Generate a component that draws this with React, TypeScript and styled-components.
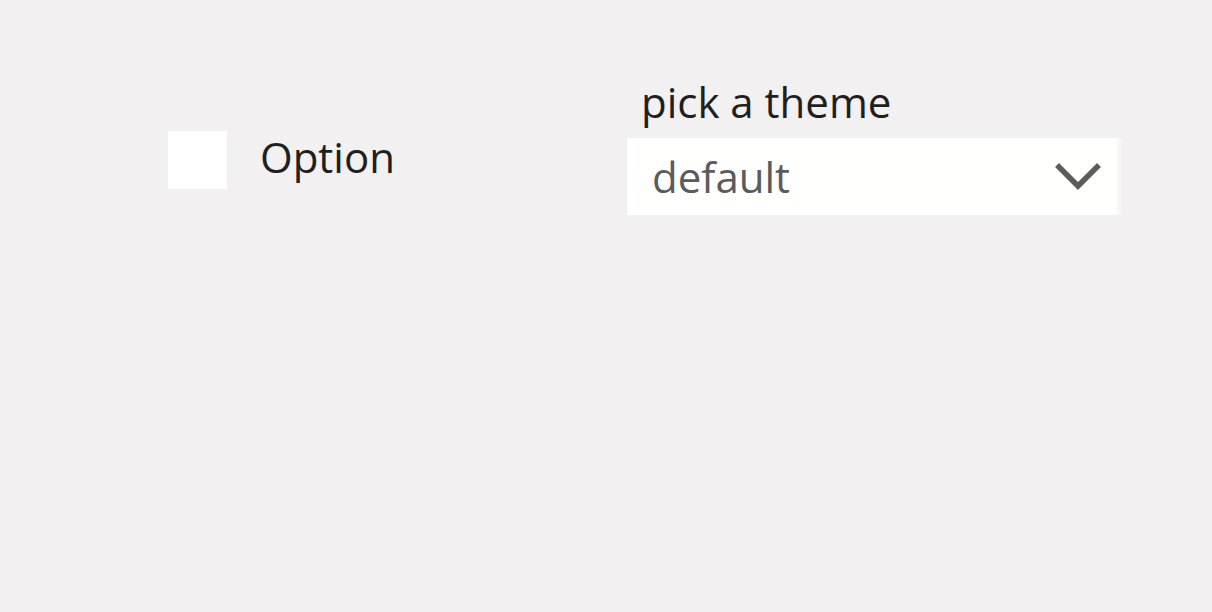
import styled, { createGlobalStyle } from "styled-components";

const GlobalStyle = createGlobalStyle`
  html, body {
    margin: 0;
    padding: 0;
    background: #f3f0f1;
    font-family: "Open Sans", "Noto Sans", "Liberation Sans", sans-serif;
  }
`;

const Page = styled.div`
  width: 1212px;
  height: 612px;
  box-sizing: border-box;
  padding: 81px 0 0 168px;
  display: flex;
  align-items: flex-start;
`;

const CheckRow = styled.label`
  display: flex;
  align-items: center;
  gap: 33px;
  margin-top: 50px;
  cursor: pointer;
`;

const Box = styled.span`
  width: 59px;
  height: 58px;
  background: #ffffff;
  display: block;
`;

const Text = styled.span<{ $muted?: boolean }>`
  font-size: 42px;
  line-height: 1;
  color: ${(p) => (p.$muted ? "#5b5b5b" : "#201f1f")};
`;

const CheckText = styled(Text)`
  padding-bottom: 6px;
`;

const Field = styled.div`
  display: flex;
  flex-direction: column;
  margin-left: 232px;
`;

const FieldLabel = styled(Text)`
  padding-left: 14px;
  height: 57px;
  display: flex;
  align-items: flex-start;
`;

const Select = styled.div`
  width: 494px;
  height: 77px;
  box-sizing: border-box;
  background: #fffffe;
  border-right: 4px solid #f9f8f9;
  display: flex;
  align-items: center;
  justify-content: space-between;
  padding: 0 14px 0 25px;
`;

const Chevron = () => (
  <svg width="50" height="30" viewBox="0 0 50 30">
    <path d="M4 3 L25 24 L46 3" fill="none" stroke="#5c5c5c" strokeWidth="5.5" />
  </svg>
);

export default function App() {
  return (
    <>
      <GlobalStyle />
      <Page>
        <CheckRow>
          <Box />
          <CheckText>Option</CheckText>
        </CheckRow>
        <Field>
          <FieldLabel>pick a theme</FieldLabel>
          <Select>
            <Text $muted>default</Text>
            <Chevron />
          </Select>
        </Field>
      </Page>
    </>
  );
}
